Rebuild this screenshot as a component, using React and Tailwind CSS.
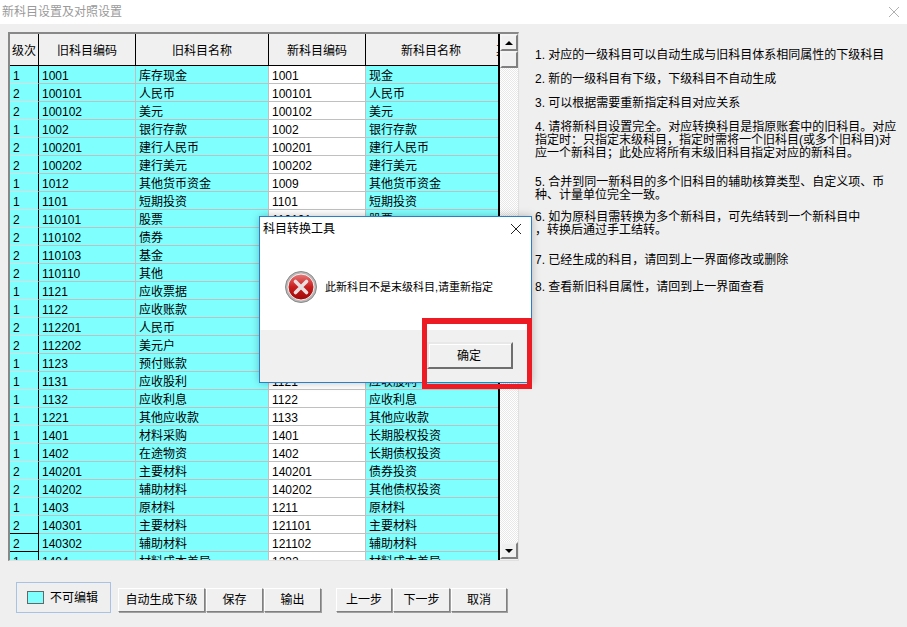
import React from "react";

const rows = [
  ["1", "1001", "库存现金", "1001", "现金"],
  ["2", "100101", "人民币", "100101", "人民币"],
  ["2", "100102", "美元", "100102", "美元"],
  ["1", "1002", "银行存款", "1002", "银行存款"],
  ["2", "100201", "建行人民币", "100201", "建行人民币"],
  ["2", "100202", "建行美元", "100202", "建行美元"],
  ["1", "1012", "其他货币资金", "1009", "其他货币资金"],
  ["1", "1101", "短期投资", "1101", "短期投资"],
  ["2", "110101", "股票", "110101", "股票"],
  ["2", "110102", "债券", "110102", "债券"],
  ["2", "110103", "基金", "110103", "基金"],
  ["2", "110110", "其他", "110110", "其他"],
  ["1", "1121", "应收票据", "1111", "应收票据"],
  ["1", "1122", "应收账款", "1112", "应收账款"],
  ["2", "112201", "人民币", "111201", "人民币"],
  ["2", "112202", "美元户", "111202", "美元户"],
  ["1", "1123", "预付账款", "1113", "预付账款"],
  ["1", "1131", "应收股利", "1121", "应收股利"],
  ["1", "1132", "应收利息", "1122", "应收利息"],
  ["1", "1221", "其他应收款", "1133", "其他应收款"],
  ["1", "1401", "材料采购", "1401", "长期股权投资"],
  ["1", "1402", "在途物资", "1402", "长期债权投资"],
  ["2", "140201", "主要材料", "140201", "债券投资"],
  ["2", "140202", "辅助材料", "140202", "其他债权投资"],
  ["1", "1403", "原材料", "1211", "原材料"],
  ["2", "140301", "主要材料", "121101", "主要材料"],
  ["2", "140302", "辅助材料", "121102", "辅助材料"],
  ["1", "1404", "材料成本差异", "1232", "材料成本差异"],
];

function HeaderCell({ w, children }) {
  return (
    <div className={`${w} shrink-0 h-[32px] pt-[2px] flex items-center justify-center bg-[#f0f0f0] border-r border-b border-black overflow-hidden whitespace-nowrap`}>
      {children}
    </div>
  );
}

function Row({ row, current, beforeCurrent }) {
  const levelBorder = current || beforeCurrent ? "border-b-black" : "border-b-[#dcdcdc]";
  return (
    <div className="flex h-[18px] leading-[20px]">
      <div className={`w-[29px] shrink-0 pl-[3px] overflow-hidden bg-[#80ffff] border-r border-b border-r-black ${levelBorder}`}>{row[0]}</div>
      <div className="w-[97px] shrink-0 pl-[3px] overflow-hidden bg-[#80ffff] border-r border-b border-[#c0c0c0]">{row[1]}</div>
      <div className="w-[133px] shrink-0 pl-[3px] overflow-hidden bg-[#80ffff] border-r border-b border-[#c0c0c0]">{row[2]}</div>
      <div className="w-[97px] shrink-0 pl-[3px] overflow-hidden bg-white border-r border-b border-[#c0c0c0]">{row[3]}</div>
      <div className="w-[132px] shrink-0 pl-[3px] overflow-hidden bg-[#80ffff] border-b border-[#c0c0c0]">{row[4]}</div>
    </div>
  );
}

function ScrollButton({ children }) {
  return (
    <div className="h-[17px] bg-[#f0f0f0] border-2 border-t-[#f4f4f4] border-l-[#f4f4f4] border-r-[#808080] border-b-[#808080] flex items-center justify-center">
      {children}
    </div>
  );
}

function Scrollbar() {
  return (
    <div className="w-[18px] shrink-0 h-[525px] flex flex-col bg-[repeating-conic-gradient(#ffffff_0_25%,#e8e8e8_0_50%)] bg-[length:2px_2px]">
      <ScrollButton>
        <div className="w-0 h-0 border-x-[4px] border-x-transparent border-b-[4px] border-b-black" />
      </ScrollButton>
      <ScrollButton />
      <div className="flex-1" />
      <ScrollButton>
        <div className="w-0 h-0 border-x-[4px] border-x-transparent border-t-[4px] border-t-black" />
      </ScrollButton>
    </div>
  );
}

function Btn({ w, children }) {
  return (
    <div className={`${w} h-[24px] shrink-0 flex items-center justify-center bg-[#f0f0f0] border border-t-white border-l-white border-r-[#808080] border-b-[#808080] shadow-[1px_1px_0_#a0a0a0]`}>
      {children}
    </div>
  );
}

function Notes() {
  return (
    <div className="ml-[16px] text-[12px] leading-[13px] text-black whitespace-nowrap pt-[17px]">
      <p>1. 对应的一级科目可以自动生成与旧科目体系相同属性的下级科目</p>
      <p className="mt-[11px]">2. 新的一级科目有下级，下级科目不自动生成</p>
      <p className="mt-[11px]">3. 可以根据需要重新指定科目对应关系</p>
      <p className="mt-[11px]">4. 请将新科目设置完全。对应转换科目是指原账套中的旧科目。对应<br />指定时：只指定末级科目，指定时需将一个旧科目(或多个旧科目)对<br />应一个新科目；此处应将所有末级旧科目指定对应的新科目。</p>
      <p className="mt-[16px]">5. 合并到同一新科目的多个旧科目的辅助核算类型、自定义项、币<br />种、计量单位完全一致。</p>
      <p className="mt-[9px]">6. 如为原科目需转换为多个新科目，可先结转到一个新科目中<br />，转换后通过手工结转。</p>
      <p className="mt-[17px]">7. 已经生成的科目，请回到上一界面修改或删除</p>
      <p className="mt-[14px]">8. 查看新旧科目属性，请回到上一界面查看</p>
    </div>
  );
}

function ErrorIcon() {
  return (
    <svg width="32" height="32" viewBox="0 0 32 32" className="shrink-0">
      <defs>
        <linearGradient id="err" x1="0" y1="0" x2="0" y2="1">
          <stop offset="0" stopColor="#e87a7a" />
          <stop offset="0.5" stopColor="#c81e1e" />
          <stop offset="1" stopColor="#a00808" />
        </linearGradient>
      </defs>
      <circle cx="16" cy="16" r="15.5" fill="#b8b8b8" stroke="#8a8a8a" />
      <circle cx="16" cy="16" r="13" fill="url(#err)" stroke="#f4f4f4" strokeWidth="1" />
      <path d="M10.5 10.5 L21.5 21.5 M21.5 10.5 L10.5 21.5" stroke="#e8e0e0" strokeWidth="3.6" strokeLinecap="round" />
    </svg>
  );
}

function Dialog() {
  return (
    <div className="absolute left-[259px] top-[216px] w-[273px] h-[167px] border border-[#2b7fc4] bg-white flex flex-col shadow-[0_0_8px_rgba(0,0,0,0.25)]">
      <div className="h-[24px] flex items-center justify-between pl-[3px] pr-[9px] text-[12px] text-black">
        <span>科目转换工具</span>
        <svg width="12" height="12" viewBox="0 0 12 12" fill="none" stroke="#222" strokeWidth="1"><path d="M1 1 L11 11 M11 1 L1 11" /></svg>
      </div>
      <div className="h-[89px] flex items-center pl-[25px] pt-[3px] gap-[8px] text-[11px] text-black">
        <ErrorIcon />
        <span>此新科目不是末级科目,请重新指定</span>
      </div>
      <div className="flex-1 bg-[#f0f0f0] flex justify-end pt-[12px] pr-[18px]">
        <div className="w-[86px] h-[27px] pr-[2px] flex items-center justify-center text-[12px] bg-[#f0f0f0] border-2 border-t-[#e8e8e8] border-l-[#e8e8e8] border-r-[#6e6e6e] border-b-[#6e6e6e] shadow-[inset_1px_1px_0_#fff]">确定</div>
      </div>
    </div>
  );
}

export default function App() {
  return (
    <div className="relative w-[907px] h-[627px] overflow-hidden bg-[#efefef] text-[12px] text-black font-['Liberation_Sans','Noto_Sans_CJK_SC',sans-serif]">
      <div className="h-[24px] bg-white flex items-center justify-between pl-[2px] pr-[7px]">
        <span className="text-[#9a9a9a] -mt-[1px]">新科目设置及对照设置</span>
        <svg width="12" height="12" viewBox="0 0 12 12" fill="none" stroke="#a8a8a8" strokeWidth="0.9"><path d="M1 1 L11 11 M11 1 L1 11" /></svg>
      </div>

      <div className="flex mt-[8px] pl-[8px]">
        <div className="w-[511px] h-[529px] shrink-0 flex border-t-2 border-l-2 border-r border-b border-t-[#888] border-l-[#888] border-r-[#e0e0e0] border-b-[#e0e0e0] bg-[#f0f0f0]">
          <div className="w-[490px] shrink-0 h-[526px] overflow-hidden border-r-2 border-black">
            <div className="flex">
              <HeaderCell w="w-[29px]">级次</HeaderCell>
              <HeaderCell w="w-[97px]">旧科目编码</HeaderCell>
              <HeaderCell w="w-[133px]">旧科目名称</HeaderCell>
              <HeaderCell w="w-[97px]">新科目编码</HeaderCell>
              <div className="w-[130px] shrink-0 h-[32px] pt-[2px] flex items-center justify-center bg-[#f0f0f0] border-b border-black">新科目名称</div>
              <div className="w-[2px] shrink-0 h-[32px] pt-[2px] flex items-center overflow-hidden bg-[#f0f0f0] border-b border-black">其</div>
            </div>
            {rows.map((row, i) => (
              <Row key={i} row={row} current={i === 26} beforeCurrent={i === 25} />
            ))}
          </div>
          <Scrollbar />
        </div>
        <Notes />
      </div>

      <div className="flex items-start pl-[16px] mt-[21px]">
        <div className="w-[95px] h-[31px] flex items-center pl-[10px] gap-[6px] border border-[#a9c1e2]">
          <div className="w-[17px] h-[13px] bg-[#80ffff] border border-[#666]" />
          <span>不可编辑</span>
        </div>
        <div className="flex ml-[7px] mt-[6px] gap-[1px]">
          <Btn w="w-[87px]">自动生成下级</Btn>
          <Btn w="w-[57px]">保存</Btn>
          <Btn w="w-[57px]">输出</Btn>
        </div>
        <div className="flex ml-[15px] mt-[6px] gap-[1px]">
          <Btn w="w-[56px]">上一步</Btn>
          <Btn w="w-[57px]">下一步</Btn>
          <Btn w="w-[56px]">取消</Btn>
        </div>
      </div>

      <Dialog />
      <div className="absolute left-[422px] top-[318px] w-[110px] h-[71px] border-[5px] border-t-[6px] border-[#ed1c24]" />
    </div>
  );
}
